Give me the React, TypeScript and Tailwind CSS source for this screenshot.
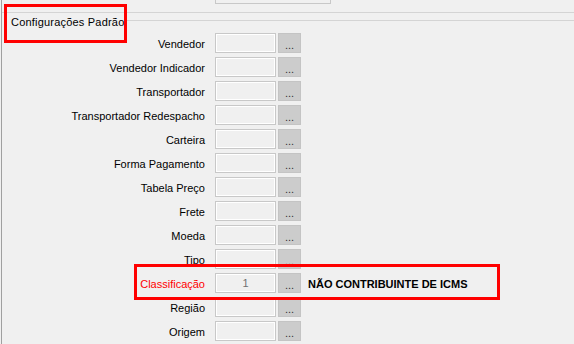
const rows = [
  "Vendedor",
  "Vendedor Indicador",
  "Transportador",
  "Transportador Redespacho",
  "Carteira",
  "Forma Pagamento",
  "Tabela Preço",
  "Frete",
  "Moeda",
  "Tipo",
  "Classificação",
  "Região",
  "Origem",
];

const LookupField = ({ value }: { value?: string }) => (
  <div className="flex gap-[2px]">
    <div className="w-[61px] h-[20px] border border-[#c8c8c8] bg-[#f0f0f0] shadow-[inset_0_0_0_1px_#ffffff] flex items-center justify-center text-[#707070] leading-none pt-[1px]">
      {value}
    </div>
    <div className="w-[23px] h-[20px] border border-[#c4c4c4] bg-[#cccccc] flex items-center justify-center text-[#333333] leading-none pt-[4px]">
      ...
    </div>
  </div>
);

export default function App() {
  return (
    <div className="relative w-[574px] h-[344px] overflow-hidden bg-[#f0f0f0] flex font-['Liberation_Sans',sans-serif] text-[11px] text-black">
      <div className="w-px shrink-0" />
      <div className="flex-1 flex flex-col border-l border-[#a0a0a0]">
        <div className="h-[4px] pl-[213px]">
          <div className="w-[116px] h-full border-x border-b border-[#c8c8c8]" />
        </div>

        <div className="mt-[8px] h-px bg-[#d4d4d4]" />

        <div className="h-[20px] flex items-start">
          <span className="ml-[9px] mt-[3px] leading-[13px] tracking-[0.2px]">Configurações Padrão</span>
          <div className="flex-1 ml-[3px] mt-[7px] h-px bg-[#d4d4d4]" />
        </div>

        <div className="flex flex-col gap-[4px]">
          {rows.map((label) => {
            const highlighted = label === "Classificação";
            return (
              <div key={label} className="flex items-center h-[20px]">
                <div
                  className={`w-[203px] text-right leading-none pt-[2px] ${highlighted ? "text-[#ff0000]" : ""}`}
                >
                  {label}
                </div>
                <div className="ml-[10px]">
                  <LookupField value={highlighted ? "1" : undefined} />
                </div>
                {highlighted && (
                  <span className="ml-[7px] pt-[2px] font-bold leading-none">NÃO CONTRIBUINTE DE ICMS</span>
                )}
              </div>
            );
          })}
        </div>
      </div>

      {/* red highlight annotations */}
      <div className="absolute left-[4px] top-[4px] w-[123px] h-[39px] border-[3px] border-[#ff0000]" />
      <div className="absolute left-[134px] top-[264px] w-[366px] h-[36px] border-[3px] border-[#ff0000]" />
    </div>
  );
}
